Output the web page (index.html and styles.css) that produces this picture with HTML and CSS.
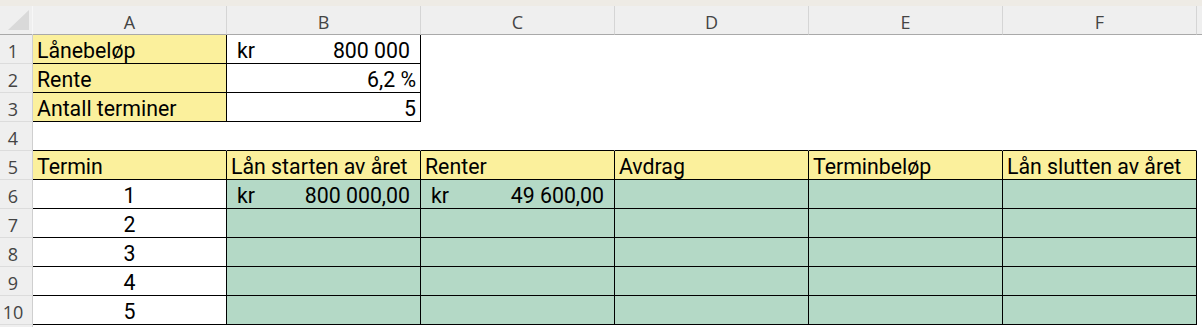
FILE: index.html
```html
<!DOCTYPE html>
<html lang="nb">
<head>
<meta charset="utf-8">
<title>Annuitetslån</title>
<link rel="stylesheet" href="styles.css">
</head>
<body>
<div class="sheet">
  <div class="topstrip"></div>

  <!-- column headers -->
  <div class="corner"><span class="corner-tri"></span></div>
  <div class="colhead">A</div>
  <div class="colhead">B</div>
  <div class="colhead">C</div>
  <div class="colhead">D</div>
  <div class="colhead">E</div>
  <div class="colhead">F</div>
  <div class="colhead tail"></div>

  <!-- row 1 -->
  <div class="rowhead">1</div>
  <div class="cell bx y">Lånebeløp</div>
  <div class="cell bx acct"><span>kr</span><span>800 000</span></div>
  <div class="cell"></div><div class="cell"></div><div class="cell"></div><div class="cell"></div>
  <div class="cell tail"></div>

  <!-- row 2 -->
  <div class="rowhead">2</div>
  <div class="cell bx y">Rente</div>
  <div class="cell bx num">6,2 %</div>
  <div class="cell"></div><div class="cell"></div><div class="cell"></div><div class="cell"></div>
  <div class="cell tail"></div>

  <!-- row 3 -->
  <div class="rowhead">3</div>
  <div class="cell bx y">Antall terminer</div>
  <div class="cell bx num">5</div>
  <div class="cell"></div><div class="cell"></div><div class="cell"></div><div class="cell"></div>
  <div class="cell tail"></div>

  <!-- row 4 -->
  <div class="rowhead">4</div>
  <div class="cell bb"></div><div class="cell bb"></div><div class="cell bb"></div>
  <div class="cell bb"></div><div class="cell bb"></div><div class="cell bb"></div>
  <div class="cell tail"></div>

  <!-- row 5 -->
  <div class="rowhead">5</div>
  <div class="cell bx y">Termin</div>
  <div class="cell bx y">Lån starten av året</div>
  <div class="cell bx y">Renter</div>
  <div class="cell bx y">Avdrag</div>
  <div class="cell bx y">Terminbeløp</div>
  <div class="cell bx y">Lån slutten av året</div>
  <div class="cell tail"></div>

  <!-- row 6 -->
  <div class="rowhead">6</div>
  <div class="cell bx ctr">1</div>
  <div class="cell bx g acct"><span>kr</span><span>800 000,00</span></div>
  <div class="cell bx g acct"><span>kr</span><span>49 600,00</span></div>
  <div class="cell bx g"></div><div class="cell bx g"></div><div class="cell bx g"></div>
  <div class="cell tail"></div>

  <!-- row 7 -->
  <div class="rowhead">7</div>
  <div class="cell bx ctr">2</div>
  <div class="cell bx g"></div><div class="cell bx g"></div><div class="cell bx g"></div>
  <div class="cell bx g"></div><div class="cell bx g"></div>
  <div class="cell tail"></div>

  <!-- row 8 -->
  <div class="rowhead">8</div>
  <div class="cell bx ctr">3</div>
  <div class="cell bx g"></div><div class="cell bx g"></div><div class="cell bx g"></div>
  <div class="cell bx g"></div><div class="cell bx g"></div>
  <div class="cell tail"></div>

  <!-- row 9 -->
  <div class="rowhead">9</div>
  <div class="cell bx ctr">4</div>
  <div class="cell bx g"></div><div class="cell bx g"></div><div class="cell bx g"></div>
  <div class="cell bx g"></div><div class="cell bx g"></div>
  <div class="cell tail"></div>

  <!-- row 10 -->
  <div class="rowhead">10</div>
  <div class="cell bx ctr">5</div>
  <div class="cell bx g"></div><div class="cell bx g"></div><div class="cell bx g"></div>
  <div class="cell bx g"></div><div class="cell bx g"></div>
  <div class="cell tail"></div>

  <!-- remainder below the last row -->
  <div class="rowhead rest"></div>
  <div class="cell rest-fill"></div>
</div>
</body>
</html>
```

FILE: styles.css
```css
html, body {
  margin: 0;
  padding: 0;
  background: #ffffff;
}

.sheet {
  width: 1202px;
  height: 327px;
  overflow: hidden;
  display: grid;
  grid-template-columns: 33px repeat(6, 194px) 1fr;
  grid-template-rows: 6px 29px repeat(10, 29px) 1fr;
  font-family: Roboto, "Liberation Sans", sans-serif;
}

.topstrip {
  grid-column: 1 / -1;
  background: #eeebe5;
}

/* headers */
.corner {
  position: relative;
  background: #efefef;
  border-right: 1px solid #f7f7f7;
  border-bottom: 1px solid #a9a9a9;
}

.corner-tri {
  position: absolute;
  left: 8px;
  top: 4px;
  width: 21px;
  height: 20px;
  background: #d9d9d9;
  clip-path: polygon(100% 0, 100% 100%, 0 100%);
}

.colhead {
  background: #efefef;
  border-right: 1px solid #d5d5d5;
  border-bottom: 1px solid #a9a9a9;
  font-family: "Open Sans", "Noto Sans", sans-serif;
  font-size: 18px;
  line-height: 24px;
  color: #444444;
  display: flex;
  align-items: flex-end;
  justify-content: center;
}

.colhead.tail {
  border-right: none;
}

.rowhead {
  background: #efefef;
  border-right: 1px solid #cfcfcf;
  border-bottom: 1px solid #dcdcdc;
  font-family: "Open Sans", "Noto Sans", sans-serif;
  font-size: 18px;
  line-height: 24px;
  color: #444444;
  display: flex;
  align-items: flex-end;
  justify-content: center;
  padding-right: 6px;
}

.rowhead.rest {
  border-bottom: none;
}

.rest-fill {
  grid-column: 2 / -1;
}

/* cells */
.cell {
  border-right: 1px solid transparent;
  border-bottom: 1px solid transparent;
  font-size: 21.3px;
  line-height: 24px;
  color: #000000;
  display: flex;
  align-items: flex-end;
  padding: 0 4px;
  white-space: nowrap;
  overflow: hidden;
}

.cell.tail {
  border: none;
  padding: 0;
}

.bx {
  border-right-color: #000000;
  border-bottom-color: #000000;
}

.bb {
  border-bottom-color: #000000;
}

.y {
  background: #fbf09c;
}

.g {
  background: #b4d9c6;
}

.num {
  justify-content: flex-end;
}

.ctr {
  justify-content: center;
}

.acct {
  justify-content: space-between;
  padding: 0 10px;
}
```
